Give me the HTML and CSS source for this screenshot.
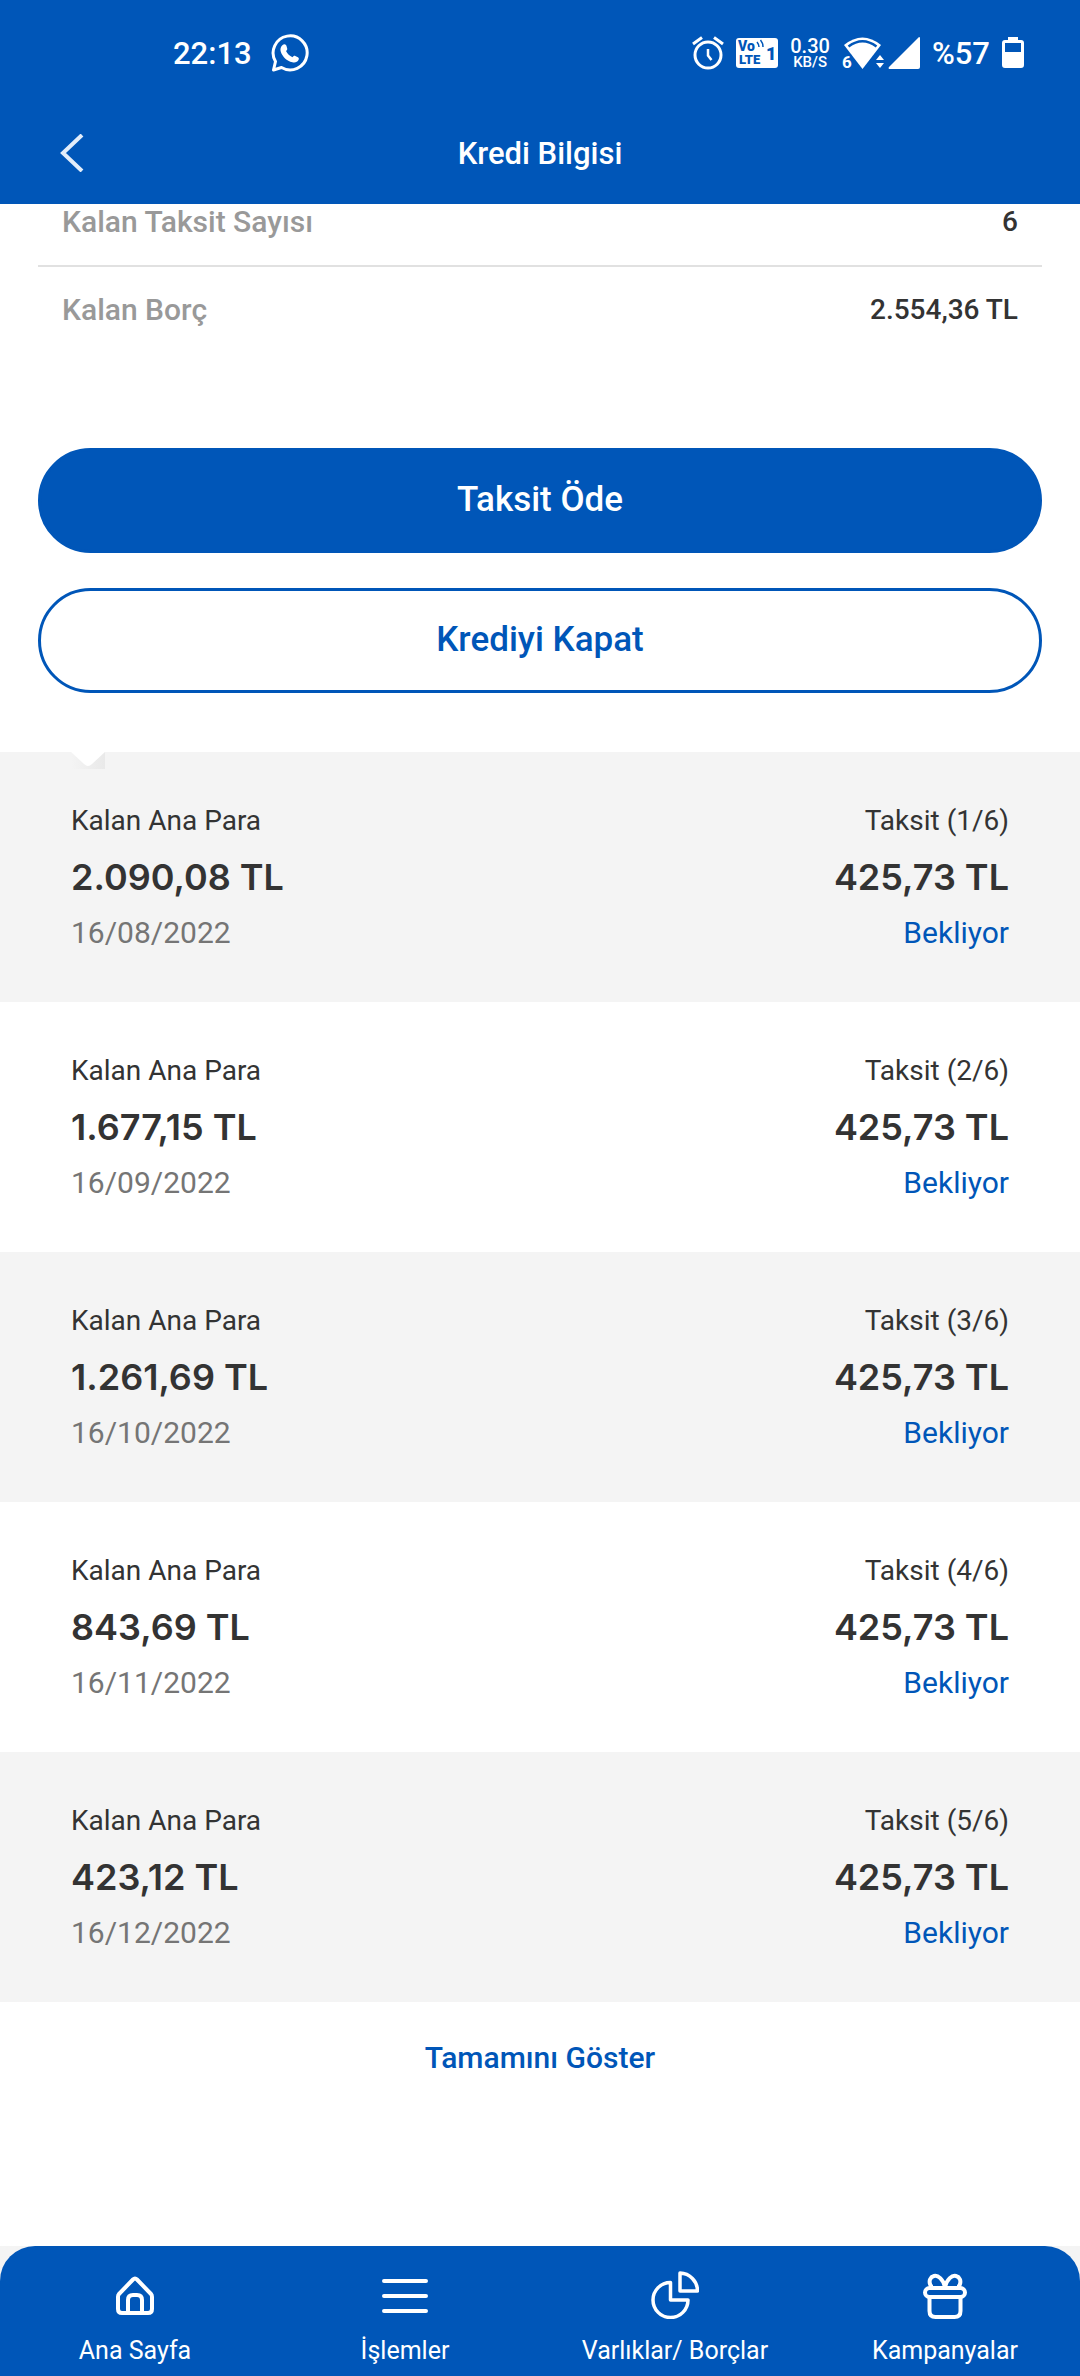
FILE: index.html
```html
<!DOCTYPE html>
<html lang="tr">
<head>
    <meta charset="UTF-8">
    <meta name="viewport" content="width=device-width, initial-scale=1.0">
    <title>Kredi Bilgisi</title>
    <link rel="stylesheet" href="styles.css">
</head>
<body>
    <header class="header">
        <div class="status-bar">
            <span class="clock">22:13</span>
            <svg class="whatsapp" width="38" height="38" viewBox="0 0 38 38" fill="none">
                <path d="M2.500 36 L4.500 27.500 A17 17 0 1 1 10.500 33.500 Z" stroke="#fff" stroke-width="3" stroke-linejoin="round"/>
                <path d="M12.500 10.500c1.500-.6 2.600.2 3 1.600l.7 2.300c.3 1-.2 1.700-1.200 2.600 1.500 3 3.500 4.900 6.500 6.200 1-1.300 1.700-1.800 2.800-1.300l2.600 1.300c1 .6 1.200 1.400.7 2.600-1 2.300-3.600 3.200-6.200 2.500-5.800-1.600-9.800-5.400-11.600-10.600-.9-2.900.2-6.200 2.700-7.200z" fill="#fff"/>
            </svg>
            <div class="status-icons">
                <svg width="32" height="34" viewBox="0 0 32 34" fill="none" stroke="#fff" stroke-width="3">
                    <circle cx="16" cy="19" r="13"/>
                    <path d="M1 8l9-6.500M31 8l-9-6.500"/>
                    <path d="M16 13v6.500l3.500 4.500" stroke-width="2.500"/>
                </svg>
                <svg width="42" height="32" viewBox="0 0 42 32">
                    <rect y="1" width="42" height="30" rx="3" fill="#fff"/>
                    <text class="volte" x="2" y="14" font-size="14">Vo</text>
                    <text class="volte" x="3" y="27" font-size="13">LTE</text>
                    <text class="volte" x="30" y="23" font-size="18">1</text>
                    <path d="M21 5q2 2.500 2 5M24.500 3q2.500 3 2.500 7" fill="none" stroke="#0056b8" stroke-width="1.500"/>
                </svg>
                <div class="speed">
                    <span class="speed-value">0.30</span>
                    <span class="speed-unit">KB/S</span>
                </div>
                <div class="signal">
                    <svg width="42" height="34" viewBox="0 0 42 34" fill="#fff">
                        <path d="M20.500 33L2 9Q20.500-6 39 9Z"/>
                        <path d="M6.500 10.500Q20.500 0 34.500 10.500" fill="none" stroke="#0056b8" stroke-width="2.500"/>
                        <path d="M0 18H9L14 34H0Z" fill="#0056b8"/>
                        <text class="wifi-gen" x="0" y="32" font-size="17">6</text>
                        <path d="M38 19l4 5h-8zM38 32l4-5h-8z"/>
                    </svg>
                    <svg width="32" height="34" viewBox="0 0 32 34" fill="#fff">
                        <path d="M32 2v29q0 2-2 2H1q-1-1 0-2L31 1q1 0 1 1z"/>
                    </svg>
                </div>
                <span class="battery-text">%57</span>
                <svg width="22" height="32" viewBox="0 0 22 32" fill="#fff">
                    <path d="M6 0h10v3h3q3 0 3 3v22q0 3-3 3H3q-3 0-3-3V6q0-3 3-3h3z"/>
                    <path d="M3 6h16v9H3z" fill="#0056b8"/>
                </svg>
            </div>
        </div>
        <div class="title-bar">
            <button class="back" type="button" aria-label="Geri">
                <svg width="24" height="38" viewBox="0 0 24 38" fill="none" stroke="#e2edfa" stroke-width="4">
                    <path d="M22 1L3 19l19 18"/>
                </svg>
            </button>
            <h1>Kredi Bilgisi</h1>
        </div>
    </header>

    <main class="content">
        <dl class="info">
            <div class="info-row">
                <dt>Kalan Taksit Sayısı</dt>
                <dd>6</dd>
            </div>
            <div class="info-row">
                <dt>Kalan Borç</dt>
                <dd>2.554,36 TL</dd>
            </div>
        </dl>

        <div class="actions">
            <button class="button" type="button">Taksit Öde</button>
            <button class="button outline" type="button">Krediyi Kapat</button>
        </div>

        <div class="plan">
            <svg class="notch" width="34" height="17" viewBox="0 0 34 17">
                <defs>
                    <linearGradient id="notchShade">
                        <stop offset="0" stop-color="#f4f4f4"/>
                        <stop offset="1" stop-color="#e9e9e9"/>
                    </linearGradient>
                </defs>
                <path d="M0 0h34v17H0z" fill="url(#notchShade)"/>
                <path d="M0 0h34L21 12q-4 4-8 0z" fill="#fff"/>
            </svg>
            <ul class="installments">
                <li class="installment">
                    <div class="remaining">
                        <span class="label">Kalan Ana Para</span>
                        <span class="amount">2.090,08 TL</span>
                        <span class="date">16/08/2022</span>
                    </div>
                    <div class="payment">
                        <span class="label">Taksit (1/6)</span>
                        <span class="amount">425,73 TL</span>
                        <span class="state">Bekliyor</span>
                    </div>
                </li>
                <li class="installment">
                    <div class="remaining">
                        <span class="label">Kalan Ana Para</span>
                        <span class="amount">1.677,15 TL</span>
                        <span class="date">16/09/2022</span>
                    </div>
                    <div class="payment">
                        <span class="label">Taksit (2/6)</span>
                        <span class="amount">425,73 TL</span>
                        <span class="state">Bekliyor</span>
                    </div>
                </li>
                <li class="installment">
                    <div class="remaining">
                        <span class="label">Kalan Ana Para</span>
                        <span class="amount">1.261,69 TL</span>
                        <span class="date">16/10/2022</span>
                    </div>
                    <div class="payment">
                        <span class="label">Taksit (3/6)</span>
                        <span class="amount">425,73 TL</span>
                        <span class="state">Bekliyor</span>
                    </div>
                </li>
                <li class="installment">
                    <div class="remaining">
                        <span class="label">Kalan Ana Para</span>
                        <span class="amount">843,69 TL</span>
                        <span class="date">16/11/2022</span>
                    </div>
                    <div class="payment">
                        <span class="label">Taksit (4/6)</span>
                        <span class="amount">425,73 TL</span>
                        <span class="state">Bekliyor</span>
                    </div>
                </li>
                <li class="installment">
                    <div class="remaining">
                        <span class="label">Kalan Ana Para</span>
                        <span class="amount">423,12 TL</span>
                        <span class="date">16/12/2022</span>
                    </div>
                    <div class="payment">
                        <span class="label">Taksit (5/6)</span>
                        <span class="amount">425,73 TL</span>
                        <span class="state">Bekliyor</span>
                    </div>
                </li>
            </ul>
        </div>

        <a class="show-all" href="#">Tamamını Göster</a>
    </main>

    <div class="tab-wrap">
        <nav class="tabs">
            <a class="tab" href="#">
                <svg width="48" height="48" viewBox="0 0 48 48" fill="none" stroke="#fff" stroke-width="4" stroke-linejoin="round">
                    <path d="M22 8.500q2-2 4 0L40 23q1 1 1 3v12q0 4-4 4H11q-4 0-4-4V26q0-2 1-3z"/>
                    <path d="M17 42V29q0-5 5-5h4q5 0 5 5v13"/>
                </svg>
                <span>Ana Sayfa</span>
            </a>
            <a class="tab" href="#">
                <svg width="48" height="48" viewBox="0 0 48 48" fill="none" stroke="#fff" stroke-width="4" stroke-linecap="round">
                    <path d="M3 10h42M3 25h42M3 40h42"/>
                </svg>
                <span>İşlemler</span>
            </a>
            <a class="tab" href="#">
                <svg width="48" height="48" viewBox="0 0 48 48" fill="none" stroke="#fff" stroke-width="3.500" stroke-linejoin="round">
                    <path d="M19.500 11.500a17.500 17.500 0 1 0 17.500 17.500H19.500z"/>
                    <path d="M29 2v18h17.500A18 18 0 0 0 29 2z"/>
                </svg>
                <span>Varlıklar/ Borçlar</span>
            </a>
            <a class="tab" href="#">
                <svg width="48" height="48" viewBox="0 0 48 48" fill="none" stroke="#fff" stroke-width="4" stroke-linejoin="round">
                    <rect x="4" y="17" width="40" height="9" rx="4.500"/>
                    <path d="M8.500 26v14q0 6 6 6h19q6 0 6-6V26"/>
                    <path d="M24 16C22 8 17 4 13 5c-4 1-5 5-4 8 .5 2 2 3 3 3M24 16C26 8 31 4 35 5c4 1 5 5 4 8-.5 2-2 3-3 3"/>
                </svg>
                <span>Kampanyalar</span>
            </a>
        </nav>
    </div>
</body>
</html>
```

FILE: styles.css
```css
* {
    box-sizing: border-box;
}
body {
    margin: 0;
    min-height: 100vh;
    display: flex;
    flex-direction: column;
    font-family: Roboto, "Noto Sans", sans-serif;
    font-size: 30px;
    color: #333;
    background: #fff;
}
a {
    text-decoration: none;
}
button {
    font-family: inherit;
    cursor: pointer;
}
.header {
    position: sticky;
    top: 0;
    z-index: 2;
    color: #fff;
    background: #0056b8;
}
.status-bar {
    display: flex;
    align-items: center;
    height: 106px;
    padding: 0 56px 0 173px;
}
.clock,
.battery-text {
    font-size: 31px;
    font-weight: 500;
}
.whatsapp {
    margin-left: 19px;
}
.status-icons {
    display: flex;
    align-items: center;
    gap: 12px;
    margin-left: auto;
}
.status-icons svg {
    overflow: visible;
}
.signal {
    display: flex;
    gap: 4px;
}
.volte {
    font-weight: 900;
    fill: #0056b8;
}
.wifi-gen {
    font-weight: 700;
}
.speed {
    display: flex;
    flex-direction: column;
    align-items: center;
    font-weight: 500;
}
.speed-value {
    font-size: 20px;
    line-height: 18px;
}
.speed-unit {
    font-size: 15px;
    line-height: 15px;
}
.title-bar {
    display: grid;
    grid-template-columns: 1fr auto 1fr;
    align-items: center;
    height: 98px;
    padding: 0 60px 4px;
}
.title-bar h1 {
    margin: 0;
    font-size: 31px;
    font-weight: 500;
}
.back {
    display: flex;
    justify-self: start;
    padding: 0;
    border: 0;
    background: none;
}
.content {
    flex: 1;
    /* first row is scrolled partly under the header */
    margin-top: -25px;
}
.info {
    margin: 0 38px;
}
.info-row {
    display: flex;
    justify-content: space-between;
    align-items: center;
    height: 88px;
    padding: 0 24px 3px;
    font-weight: 500;
}
.info-row + .info-row {
    height: 90px;
    margin-top: -2px;
    border-top: 2px solid #e1e1e1;
}
.info dt {
    color: #999;
}
.info dd {
    margin: 0;
    font-size: 28px;
}
.actions {
    display: flex;
    flex-direction: column;
    gap: 35px;
    margin: 93px 38px 59px;
}
.button {
    height: 105px;
    padding: 0 0 2px;
    border: 3px solid #0056b8;
    border-radius: 53px;
    font-size: 35px;
    font-weight: 500;
    color: #fff;
    background: #0056b8;
}
.button.outline {
    color: #0056b8;
    background: #fff;
}
.plan {
    position: relative;
}
.notch {
    position: absolute;
    top: 0;
    left: 71px;
}
.installments {
    margin: 0;
    padding: 0;
    list-style: none;
}
.installment {
    display: flex;
    justify-content: space-between;
    padding: 42px 71px;
    line-height: 54px;
}
.installment:nth-child(odd) {
    background: #f4f4f4;
}
.remaining,
.payment {
    display: flex;
    flex-direction: column;
}
.payment {
    text-align: right;
}
.label {
    font-size: 28px;
}
.amount {
    font-family: Inter, sans-serif;
    font-size: 36px;
    font-weight: 600;
    line-height: 58px;
}
.date {
    color: #757575;
}
.state {
    color: #0056b8;
}
.show-all {
    display: block;
    width: fit-content;
    margin: 0 auto;
    line-height: 112px;
    font-weight: 500;
    color: #0056b8;
}
.tab-wrap {
    position: sticky;
    bottom: 0;
    background: #f4f4f4;
}
.tabs {
    display: grid;
    grid-template-columns: repeat(4, 1fr);
    height: 130px;
    padding-top: 25px;
    border-radius: 35px 35px 0 0;
    background: #0056b8;
}
.tab {
    display: flex;
    flex-direction: column;
    align-items: center;
    gap: 16px;
    font-size: 25px;
    line-height: 32px;
    color: #fff;
}
```
